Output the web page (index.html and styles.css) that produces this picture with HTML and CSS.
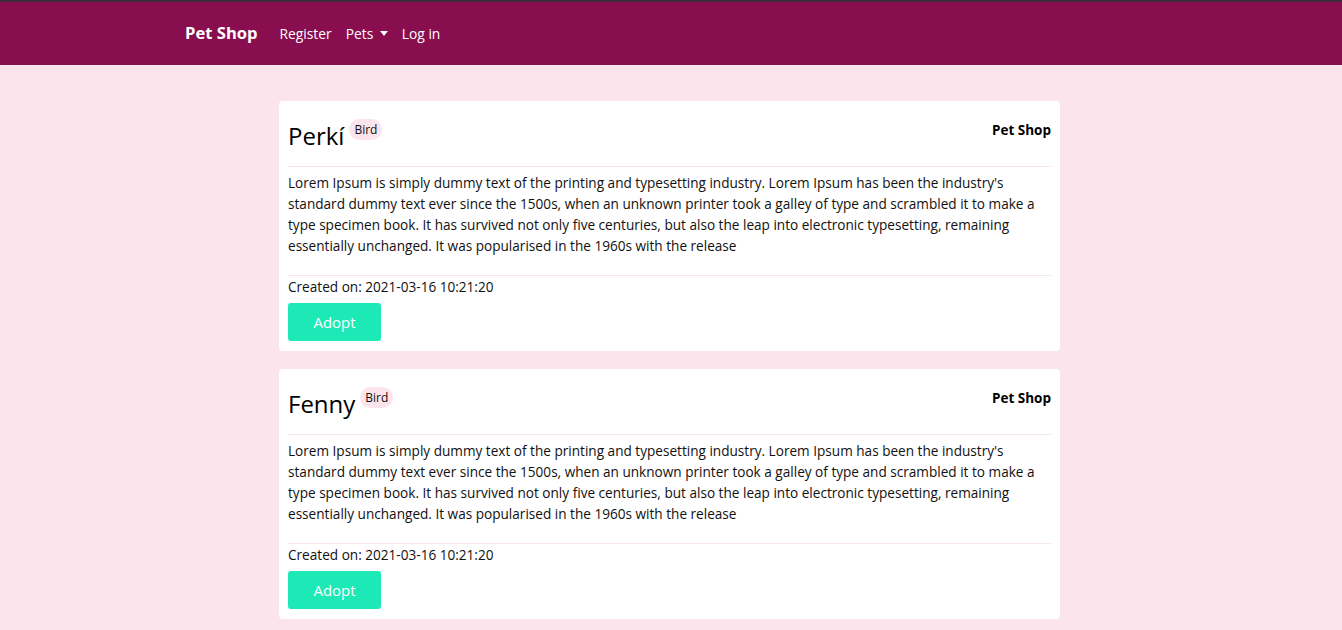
FILE: index.html
```html
<!DOCTYPE html>
<html lang="en">
<head>
<meta charset="utf-8">
<title>Pet Shop</title>
<link rel="stylesheet" href="styles.css">
</head>
<body>
<nav class="navbar">
  <div class="nav-inner">
    <a class="brand" href="#">Pet Shop</a>
    <ul class="nav-links">
      <li><a href="#">Register</a></li>
      <li><a href="#" class="dropdown">Pets <span class="caret"></span></a></li>
      <li><a href="#">Log in</a></li>
    </ul>
  </div>
</nav>
<main class="main">
  <article class="card">
    <header class="card-header">
      <div class="title-wrap">
        <h3 class="pet-name">Perkí</h3>
        <span class="badge">Bird</span>
      </div>
      <span class="shop">Pet Shop</span>
    </header>
    <hr class="sep">
    <p class="desc">Lorem Ipsum is simply dummy text of the printing and typesetting industry. Lorem Ipsum has been the industry's standard dummy text ever since the 1500s, when an unknown printer took a galley of type and scrambled it to make a type specimen book. It has survived not only five centuries, but also the leap into electronic typesetting, remaining essentially unchanged. It was popularised in the 1960s with the release</p>
    <hr class="sep">
    <div class="created">Created on: 2021-03-16 10:21:20</div>
    <button class="btn-adopt">Adopt</button>
  </article>
  <article class="card">
    <header class="card-header">
      <div class="title-wrap">
        <h3 class="pet-name">Fenny</h3>
        <span class="badge">Bird</span>
      </div>
      <span class="shop">Pet Shop</span>
    </header>
    <hr class="sep">
    <p class="desc">Lorem Ipsum is simply dummy text of the printing and typesetting industry. Lorem Ipsum has been the industry's standard dummy text ever since the 1500s, when an unknown printer took a galley of type and scrambled it to make a type specimen book. It has survived not only five centuries, but also the leap into electronic typesetting, remaining essentially unchanged. It was popularised in the 1960s with the release</p>
    <hr class="sep">
    <div class="created">Created on: 2021-03-16 10:21:20</div>
    <button class="btn-adopt">Adopt</button>
  </article>
</main>
</body>
</html>
```
FILE: styles.css
```css
* { box-sizing: border-box; }
html, body { margin: 0; padding: 0; }
body {
  background: #fce4ec;
  font-family: "Open Sans", "Noto Sans", sans-serif;
  font-size: 13.6px;
  line-height: 21px;
  color: #111;
}
.navbar {
  background: #880e4f;
  border-top: 2px solid #3e2c3a;
  height: 65px;
}
.nav-inner {
  display: flex;
  align-items: center;
  height: 100%;
  padding-left: 185px;
}
.brand {
  color: #fff;
  text-decoration: none;
  font-weight: 700;
  font-size: 16.6px;
  margin-right: 22px;
  margin-top: -3px;
}
.nav-links {
  display: flex;
  list-style: none;
  margin: 0;
  padding: 0;
  gap: 14px;
}
.nav-links a {
  color: #fff;
  text-decoration: none;
  font-size: 13.8px;
}
.caret {
  display: inline-block;
  width: 0; height: 0;
  border-left: 4.5px solid transparent;
  border-right: 4.5px solid transparent;
  border-top: 5px solid #fff;
  vertical-align: 3px;
  margin-left: 3px;
}
.main {
  width: 781px;
  margin: 36px 0 0 calc(50% - 392px);
  display: flex;
  flex-direction: column;
  gap: 18px;
}
.card {
  background: #fff;
  border-radius: 4px;
  padding: 0 9px 10px;
  display: flex;
  flex-direction: column;
  align-items: flex-start;
}
.card-header {
  align-self: stretch;
  display: flex;
  justify-content: space-between;
  align-items: flex-start;
  padding-top: 20px;
}
.title-wrap {
  display: flex;
  align-items: flex-start;
  gap: 5px;
}
.pet-name {
  margin: 0;
  font-size: 24px;
  font-weight: 400;
  line-height: 29px;
  color: #000;
}
.badge {
  background: #fce4ec;
  border-radius: 11px;
  font-size: 12px;
  line-height: 21px;
  padding: 0 5px;
  margin-top: -2px;
}
.shop {
  font-weight: 700;
  font-size: 13.5px;
  line-height: 21px;
  margin-top: -1px;
  color: #000;
}
.sep {
  align-self: stretch;
  border: 0;
  border-top: 1px solid #f6e5ea;
  margin: 16px 0 5px;
}
.desc {
  margin: 0 0 19px;
}
.desc + .sep { margin: 0; }
.created { line-height: 21px; }
.btn-adopt {
  margin-top: 6px;
  width: 93px;
  height: 38px;
  border: 0;
  border-radius: 3px;
  background: #1de9b6;
  color: #fff;
  font-family: inherit;
  font-size: 15px;
}
```
